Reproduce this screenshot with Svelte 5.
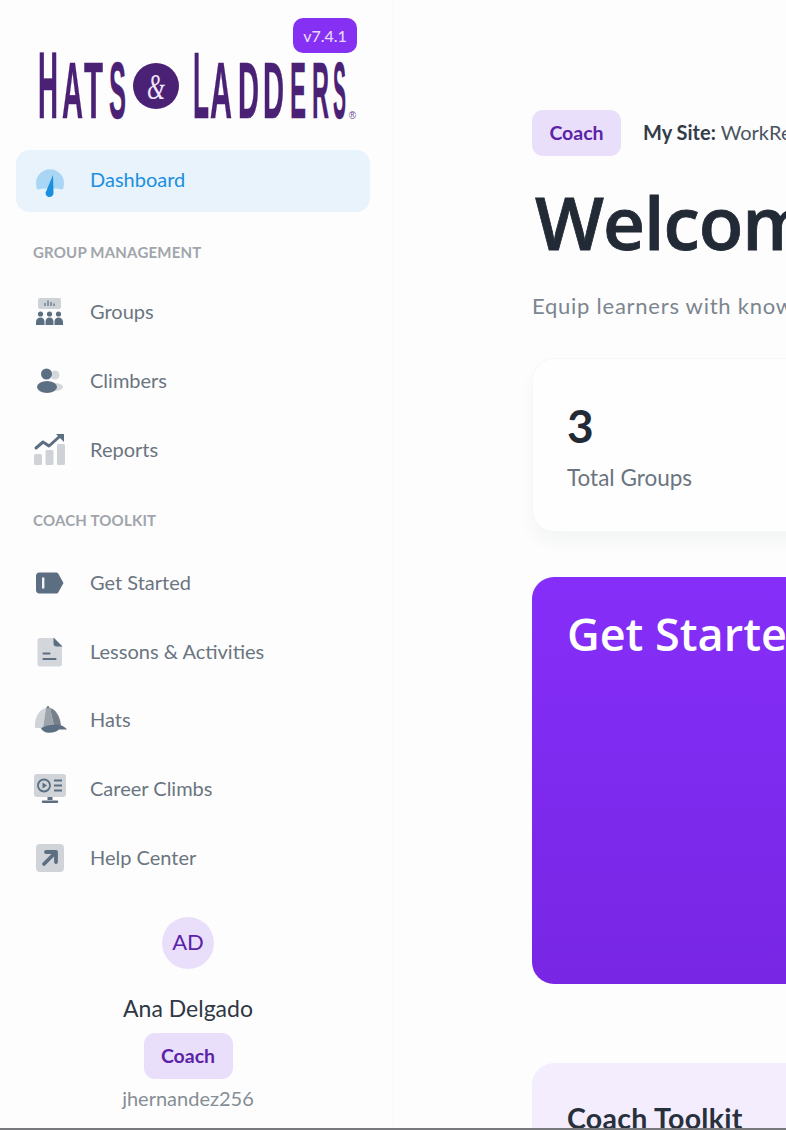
<script lang="ts">
  const hats = [
    { ch: 'H', x: 38, w: 20, top: 53 },
    { ch: 'A', x: 62, w: 21, top: 63 },
    { ch: 'T', x: 84, w: 19, top: 63 },
    { ch: 'S', x: 109, w: 17, top: 63 },
    { ch: 'L', x: 193, w: 16, top: 53 },
    { ch: 'A', x: 210, w: 22, top: 63 },
    { ch: 'D', x: 238, w: 21, top: 63 },
    { ch: 'D', x: 263, w: 21, top: 63 },
    { ch: 'E', x: 290, w: 16, top: 63 },
    { ch: 'R', x: 312, w: 17, top: 63 },
    { ch: 'S', x: 333, w: 13, top: 63 }
  ];
  const baseline = 118;
</script>

<div class="page">
  <aside class="sidebar">
    <div class="brand">
      <span class="version">v7.4.1</span>
      <svg class="logo" viewBox="30 45 335 85" aria-label="Hats and Ladders">
        {#each hats as l}
          <text class="logo-letter" x={l.x} y={baseline} textLength={l.w} lengthAdjust="spacingAndGlyphs" font-size={(baseline - l.top) / 0.69}>{l.ch}</text>
        {/each}
        <circle cx="156" cy="86" r="23" fill="#4b2175" />
        <text class="logo-amp" x="147" y="99" textLength="18" lengthAdjust="spacingAndGlyphs">&amp;</text>
        <text class="logo-reg" x="352.500" y="119" text-anchor="middle">®</text>
      </svg>
    </div>

    <nav class="nav">
      <a class="nav-item active" href="#dashboard">
        <svg class="ico" viewBox="0 0 30 30">
          <path d="M1.500 21A14 14 0 1 1 28.500 21Q29 23.500 26 23.500Q20 21.500 15 24Q10 21.500 4 23.500Q1 23.500 1.500 21z" fill="#a9d6f5" />
          <path d="M18 9L11.500 24.500a4 4 0 1 0 7 2z" fill="#1a8fe0" />
        </svg>
        <span>Dashboard</span>
      </a>

      <div class="nav-label first">GROUP MANAGEMENT</div>

      <a class="nav-item" href="#groups">
        <svg class="ico" viewBox="0 0 30 30">
          <rect x="3" y="1" width="23" height="11" rx="2" fill="#ced3d8" />
          <path d="M10 9V6M13 9V3.500M16 9V5M19 9V6.500" stroke="#64748b" stroke-width="1.300" />
          <g fill="#5c6f82">
            <circle cx="5.500" cy="17" r="2.600" /><circle cx="14.500" cy="17" r="2.600" /><circle cx="23.500" cy="17" r="2.600" />
            <path d="M1 28v-3c0-3 2-4.500 4.500-4.500s4 1.500 4 4.500v3zM10.500 28v-3c0-3 1.500-4.500 4-4.500s4 1.500 4 4.500v3zM19.500 28v-3c0-3 1.500-4.500 4-4.500s4.500 1.500 4.500 4.500v3z" />
          </g>
        </svg>
        <span>Groups</span>
      </a>
      <a class="nav-item" href="#climbers">
        <svg class="ico" viewBox="0 0 30 30">
          <circle cx="20" cy="9" r="4.500" fill="#d4d8dc" />
          <ellipse cx="20" cy="21" rx="8" ry="4" fill="#d4d8dc" />
          <circle cx="11.500" cy="8" r="5.500" fill="#5c6f82" />
          <ellipse cx="12" cy="21" rx="10" ry="6" fill="#5c6f82" />
        </svg>
        <span>Climbers</span>
      </a>
      <a class="nav-item" href="#reports">
        <svg class="ico" viewBox="1 1 30 30">
          <rect x="0" y="20" width="8" height="11" rx="1.500" fill="#cfd3d7" />
          <rect x="11.500" y="16" width="8" height="15" rx="1.500" fill="#cfd3d7" />
          <rect x="23" y="10" width="8" height="21" rx="1.500" fill="#cfd3d7" />
          <path d="M2 14l7-6 6 4 10-9" fill="none" stroke="#5c6f82" stroke-width="3" stroke-linecap="round" stroke-linejoin="round" />
          <path d="M22 0h8v8z" fill="#5c6f82" />
        </svg>
        <span>Reports</span>
      </a>

      <div class="nav-label second">COACH TOOLKIT</div>

      <a class="nav-item" href="#get-started">
        <svg class="ico" viewBox="0 0 30 30">
          <path d="M4 4.500h17c1 0 2 .5 2.500 1.500L28.500 15l-5 9c-.5 1-1.500 1.500-2.500 1.500H4c-1.500 0-3-1.500-3-3v-15c0-1.500 1.500-3 3-3z" fill="#5c6f82" />
          <rect x="7" y="9.500" width="2.400" height="11" fill="#f2f3f5" />
        </svg>
        <span>Get Started</span>
      </a>
      <a class="nav-item" href="#lessons">
        <svg class="ico" viewBox="0 0 30 30">
          <path d="M5 1h14l8 8v18c0 1.500-1 2.500-2.500 2.500h-19.500c-1.500 0-2.500-1-2.500-2.500V3.500C2.500 2 3.500 1 5 1z" fill="#d3d7db" />
          <path d="M18.500 .5L27.500 9.500h-6c-1.800 0-3-1.200-3-3z" fill="#5c6f82" />
          <path d="M8.500 16.500h6M8.500 22h12" stroke="#5c6f82" stroke-width="2.200" stroke-linecap="round" />
        </svg>
        <span>Lessons &amp; Activities</span>
      </a>
      <a class="nav-item" href="#hats">
        <svg class="ico" viewBox="2 2 30 30">
          <path d="M2 25C1 14 7 6 13 5L10 25z" fill="#d0d4d8" />
          <path d="M13 5c1-.3 3-.3 4 0l4 18-11 2z" fill="#9da3aa" />
          <path d="M17 5c6 1 10 9 11 17l-7 1z" fill="#75808b" />
          <path d="M8 25c5-3 13-4 19-3 3 .6 6 3 7 4.500H26c-4 4-12 4-15 2-1-.7-3-2-3-3.500z" fill="#5c6f82" />
          <circle cx="15" cy="4.200" r="1.300" fill="#75808b" />
        </svg>
        <span>Hats</span>
      </a>
      <a class="nav-item" href="#career-climbs">
        <svg class="ico" viewBox="1 0 30 30">
          <rect x="0" y="0" width="32" height="23" rx="3" fill="#d0d4d8" />
          <circle cx="10" cy="11.500" r="6" fill="none" stroke="#5c6f82" stroke-width="1.800" />
          <path d="M8.500 8.500l4.500 3-4.500 3z" fill="#5c6f82" />
          <path d="M20 6.500h8M20 11.500h8M20 16.500h8" stroke="#5c6f82" stroke-width="1.800" />
          <path d="M13.500 23h5v3h-5zM9 26.500h14a1 1 0 0 1 0 2.500H9a1 1 0 0 1 0-2.500z" fill="#5c6f82" />
        </svg>
        <span>Career Climbs</span>
      </a>
      <a class="nav-item" href="#help">
        <svg class="ico" viewBox="0 0 30 30">
          <rect x="1" y="1" width="28" height="28" rx="4" fill="#d0d4d8" />
          <path d="M9 21L20 10M11 9h10v10" fill="none" stroke="#5c6f82" stroke-width="3.800" stroke-linecap="round" stroke-linejoin="round" />
        </svg>
        <span>Help Center</span>
      </a>
    </nav>

    <div class="profile">
      <div class="avatar">AD</div>
      <div class="profile-name">Ana Delgado</div>
      <span class="role">Coach</span>
      <div class="profile-user">jhernandez256</div>
    </div>
  </aside>

  <main class="main">
    <div class="topline">
      <span class="role">Coach</span>
      <span class="site"><b>My Site:</b> WorkReady</span>
    </div>
    <h1>Welcome</h1>
    <p class="lede">Equip learners with knowledge</p>

    <section class="stat">
      <div class="stat-num">3</div>
      <div class="stat-label">Total Groups</div>
    </section>

    <section class="hero">
      <h2>Get Started</h2>
    </section>

    <section class="toolkit">
      <h3>Coach Toolkit</h3>
    </section>
  </main>
</div>

<style>
  :global(body) { margin: 0; background: #fdfdfd; }
  .page { display: flex; width: 786px; height: 1130px; overflow: hidden; background: #fdfdfd; border-bottom: 2px solid #77797c; box-sizing: border-box; font-family: Lato, "Liberation Sans", sans-serif; color: #6b7580; }

  .sidebar { flex: 0 0 394px; box-sizing: border-box; height: 1130px; border-right: 1px solid #f8f8f9; padding: 0 23px 0 16px; }
  .brand { position: relative; height: 150px; }
  .version { position: absolute; left: 277px; top: 18px; width: 64px; height: 35px; display: flex; align-items: center; justify-content: center; background: #8530f2; color: #e6d8fc; border-radius: 10px; font-size: 16px; font-weight: 500; }
  .logo { position: absolute; left: 14px; top: 45px; width: 335px; height: 85px; }
  .logo-letter { font-family: "Liberation Sans", sans-serif; font-weight: 700; fill: #4b2175; stroke: #4b2175; stroke-width: 0.5; stroke-linejoin: round; }
  .logo-amp { font-family: "Liberation Serif", serif; font-style: italic; font-size: 36px; fill: #efe6f8; }
  .logo-reg { font-family: "Liberation Sans", sans-serif; font-size: 10px; fill: #6d4b92; }

  .nav { display: flex; flex-direction: column; }
  .nav-item { display: flex; align-items: center; height: 68.8px; color: #6b7580; text-decoration: none; font-size: 20px; }
  .nav-item span { margin-bottom: 2px; }
  .nav-item.active { height: 62px; background: #e8f3fc; color: #1c8fe0; border-radius: 14px; }
  .nav-item.active span { margin-bottom: 4px; }
  .ico { flex: 0 0 30px; width: 30px; height: 30px; margin: 0 25px 0 19px; overflow: visible; }
  .nav-label { height: 20px; line-height: 20px; margin: 26px 0 18px 17px; font-size: 15px; letter-spacing: 0.2px; font-weight: 700; color: #a0a5ab; }
  .nav-label.first { margin-top: 30px; margin-bottom: 16px; }

  .profile { display: flex; flex-direction: column; align-items: center; margin: 25px 10px 0 0; }
  .avatar { width: 52px; height: 52px; box-sizing: border-box; padding-bottom: 3px; border-radius: 50%; background: #eadffb; color: #5b23a8; display: flex; align-items: center; justify-content: center; font-size: 22px; }
  .profile-name { margin: 24px 0 10px; height: 30px; line-height: 30px; color: #2f3844; font-size: 23px; }
  .role { display: inline-flex; align-items: center; justify-content: center; box-sizing: border-box; padding-bottom: 2px; width: 89px; height: 46px; flex: none; background: #eadffb; color: #5b23a8; border-radius: 11px; font-size: 19.500px; font-weight: 700; }
  .profile-user { margin-top: 7px; height: 24px; line-height: 24px; color: #868d95; font-size: 20px; }

  .main { flex: 0 0 auto; padding: 110px 0 0 138px; white-space: nowrap; }
  .topline { display: flex; align-items: center; gap: 22px; height: 46px; }
  .site { font-size: 20px; color: #4a5460; margin-bottom: 2px; }
  .site b { color: #333c48; }
  h1 { margin: 24px 0 0 3px; height: 84px; line-height: 84px; font-size: 73px; font-weight: 600; color: #222a36; font-family: "Open Sans", Lato, sans-serif; letter-spacing: -1px; -webkit-text-stroke: 0.8px #222a36; }
  .lede { margin: 27px 0 0; height: 30px; line-height: 30px; font-size: 22px; letter-spacing: 0.75px; color: #7b858f; }

  .stat { width: 500px; height: 174px; box-sizing: border-box; margin-top: 37px; padding: 43px 34px 0; background: #fefefe; border: 1px solid #f7f7f8; border-radius: 22px; box-shadow: 0 10px 16px rgba(30, 40, 60, 0.04); }
  .stat-num { font-size: 46px; line-height: 48px; font-weight: 700; color: #222a36; }
  .stat-label { margin-top: 14px; font-size: 22.500px; color: #6b7580; }

  .hero { width: 500px; height: 407px; box-sizing: border-box; margin-top: 45px; padding: 28px 35px; background: linear-gradient(180deg, #852ef9, #7826e4); border-radius: 22px; }
  .hero h2 { margin: 0; font-family: "Open Sans", Lato, sans-serif; font-size: 45px; line-height: 58px; font-weight: 600; color: #fff; }

  .toolkit { width: 500px; height: 100px; box-sizing: border-box; margin-top: 79px; padding: 39px 35px 0; background: #f3edfd; border-radius: 22px; }
  .toolkit h3 { margin: 0; font-size: 28.500px; letter-spacing: 0.3px; line-height: 32px; font-weight: 700; color: #28303c; }
</style>
